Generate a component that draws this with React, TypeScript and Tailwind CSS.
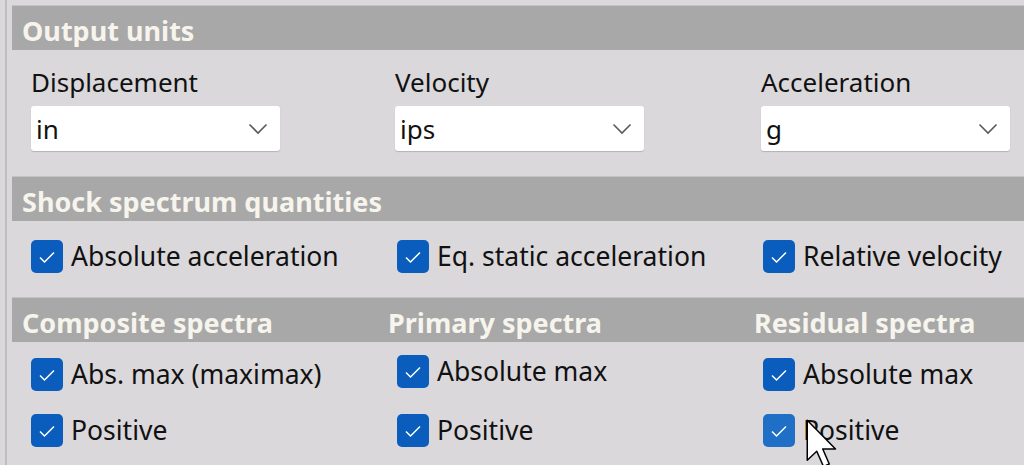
import React from "react";

const font = { fontFamily: '"Noto Sans", "Open Sans", sans-serif' };

function Chevron() {
  return (
    <svg width="20" height="12" viewBox="0 0 20 12" className="shrink-0">
      <path d="M1.5 1.5 L10 10 L18.5 1.5" fill="none" stroke="#5a5a5a" strokeWidth="1.6" />
    </svg>
  );
}

function Select({ value }: { value: string }) {
  return (
    <div className="w-[249px] h-[45px] bg-white rounded-[3px] shadow-[0_1px_1px_rgba(0,0,0,0.18)] flex items-center justify-between pl-[5px] pr-[12px]">
      <span className="text-[26px] leading-none text-[#111]">{value}</span>
      <Chevron />
    </div>
  );
}

function Check({ label, hover = false, shift = "" }: { label: string; hover?: boolean; shift?: string }) {
  return (
    <div className={`h-[33px] flex items-center gap-[8px] ${shift}`}>
      <div
        className={`w-[32px] h-[33px] rounded-[5px] flex items-center justify-center shrink-0 ${
          hover ? "bg-[#1f6fc6]" : "bg-[#0a5dbd]"
        }`}
      >
        <svg width="18" height="14" viewBox="0 0 18 14">
          <path d="M2 7.5 L6.5 12 L16 2.5" fill="none" stroke="#ffffff" strokeWidth="1.5" />
        </svg>
      </div>
      <span className="text-[26.5px] leading-none text-[#111] whitespace-nowrap">{label}</span>
    </div>
  );
}

function Header({ children }: { children: React.ReactNode }) {
  return (
    <div className="h-[45px] bg-[#a8a8a8] border-t border-[#c4c2c5] flex items-center pl-[10px] pt-[4px] text-[27px] leading-none font-bold text-[#f6f4ec] whitespace-nowrap">
      {children}
    </div>
  );
}

export default function App() {
  return (
    <div className="relative w-[1024px] h-[465px] bg-[#dad8db] overflow-hidden flex" style={font}>
      <div className="w-[5px] shrink-0" />
      <div className="w-[2px] shrink-0 bg-[#bfbdc0]" />
      <div className="w-[5px] shrink-0" />
      <div className="flex-1 flex flex-col pt-[5px]">
        <Header>Output units</Header>
        <div className="h-[126px] pl-[19px] pt-[15px] grid grid-cols-[364px_366px_1fr] content-start">
          {[
            ["Displacement", "in"],
            ["Velocity", "ips"],
            ["Acceleration", "g"],
          ].map(([l, v]) => (
            <div key={l} className="flex flex-col">
              <div className="h-[34px] flex items-center text-[26px] text-[#111] leading-none">{l}</div>
              <div className="h-[7px]" />
              <Select value={v} />
            </div>
          ))}
        </div>
        <Header>Shock spectrum quantities</Header>
        <div className="h-[76px] pl-[19px] pt-[19px] grid grid-cols-[366px_366px_1fr] content-start">
          <Check label="Absolute acceleration" />
          <Check label="Eq. static acceleration" />
          <Check label="Relative velocity" />
        </div>
        <div className="h-[45px] bg-[#a8a8a8] border-t border-[#c4c2c5] pl-[10px] pt-[4px] grid grid-cols-[366px_366px_1fr] items-center text-[27px] leading-none font-bold text-[#f6f4ec] whitespace-nowrap">
          <div>Composite spectra</div>
          <div>Primary spectra</div>
          <div>Residual spectra</div>
        </div>
        <div className="pl-[19px] pt-[16px] grid grid-cols-[366px_366px_1fr] gap-y-[23px] content-start">
          <Check label="Abs. max (maximax)" />
          <Check label="Absolute max" shift="-mt-[3px]" />
          <Check label="Absolute max" />
          <Check label="Positive" />
          <Check label="Positive" />
          <Check label="Positive" hover />
        </div>
      </div>
      <svg
        className="absolute left-[806px] top-[419px]"
        width="34"
        height="50"
        viewBox="0 0 13.6 20"
      >
        <path
          d="M0.5 0.5 L0.5 16.5 L4.3 12.9 L7 19 L9.3 18 L6.7 12 L11.8 12 Z"
          fill="#ffffff"
          stroke="#000000"
          strokeWidth="0.6"
          strokeLinejoin="round"
        />
      </svg>
    </div>
  );
}
